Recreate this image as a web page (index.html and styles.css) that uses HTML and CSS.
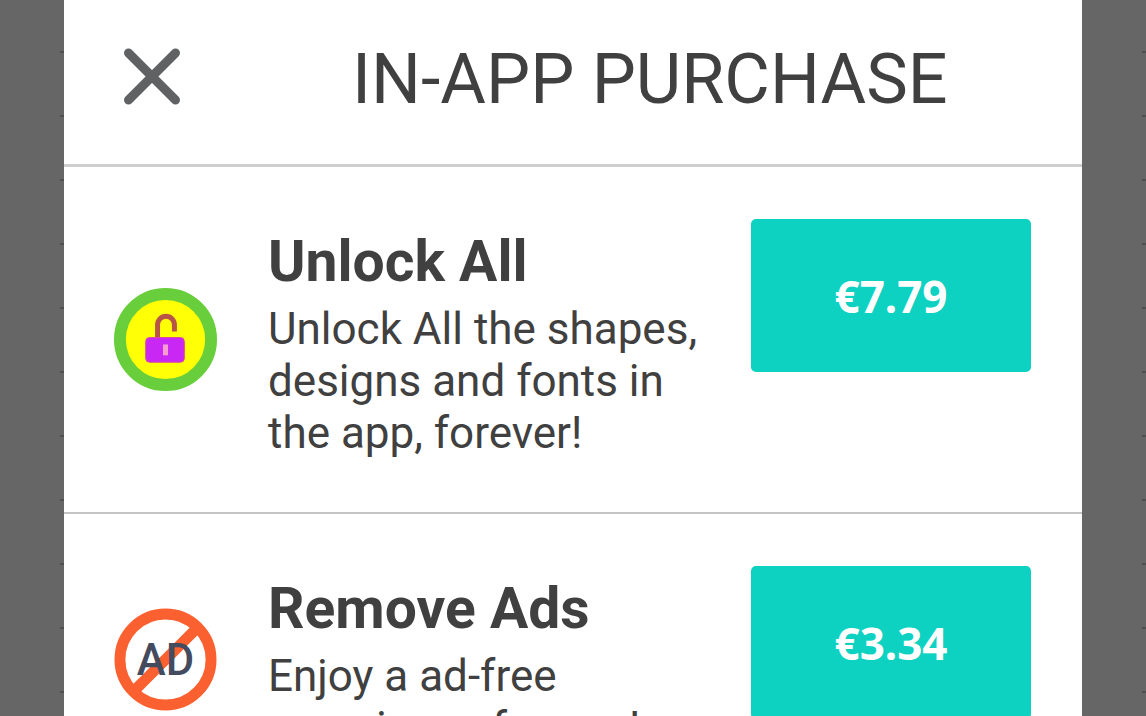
FILE: index.html
```html
<!DOCTYPE html>
<html lang="en">
<head>
<meta charset="utf-8">
<title>In-App Purchase</title>
<meta name="viewport" content="width=device-width, initial-scale=1">
<link rel="stylesheet" href="styles.css">
</head>
<body>
<div class="backdrop">
  <main class="dialog">
    <header class="header">
      <button class="close" type="button" aria-label="Close">
        <svg viewBox="0 0 60 60" aria-hidden="true"><path d="M6.500 4 53.500 51M53.500 4 6.500 51" stroke="#606162" stroke-width="9" stroke-linecap="round"/></svg>
      </button>
      <h1 class="title">IN-APP PURCHASE</h1>
    </header>
    <section class="item">
      <svg class="icon icon-unlock" viewBox="0 0 104 104" aria-hidden="true">
        <circle cx="52" cy="52" r="46" fill="#ffff05" stroke="#69ce3b" stroke-width="12"/>
        <path d="M44 52V37a8.500 8.500 0 0 1 17 0v7" fill="none" stroke="#b85448" stroke-width="5"/>
        <rect x="32" y="50" width="39" height="25" rx="4" fill="#c928f4" stroke="#dc4a9c" stroke-width="1"/>
        <path d="M49.500 57h5v11h-5z" fill="#f79bd0"/>
      </svg>
      <div class="details">
        <h2 class="name">Unlock All</h2>
        <p class="text">Unlock All the shapes, designs and fonts in the app, forever!</p>
      </div>
      <button class="price" type="button">€7.79</button>
    </section>
    <section class="item">
      <svg class="icon icon-ads" viewBox="0 0 104 104" aria-hidden="true">
        <circle cx="52" cy="52" r="46" fill="#fff" stroke="#fb6130" stroke-width="11"/>
        <path d="M20 84 84 20" stroke="#fb6130" stroke-width="11"/>
        <text class="ad" x="52" y="68" text-anchor="middle">AD</text>
      </svg>
      <div class="details">
        <h2 class="name">Remove Ads</h2>
        <p class="text">Enjoy a ad-free experience forever!</p>
      </div>
      <button class="price" type="button">€3.34</button>
    </section>
  </main>
</div>
</body>
</html>
```
FILE: styles.css
```css
* { box-sizing: border-box; }
body {
  margin: 0;
  height: 100vh;
  overflow: hidden;
  font-family: Roboto, sans-serif;
  color: #404040;
}
/* Faint ruler marks of the page behind the dialog */
.backdrop {
  min-height: 100vh;
  padding: 0 64px;
  background-color: #666;
  background-image:
    linear-gradient(transparent 51px, #505050 51px 53px, transparent 53px),
    linear-gradient(transparent 51px, #505050 51px 53px, transparent 53px);
  background-size: 4px 64px;
  background-position: 60px 0, 100% 0;
  background-repeat: repeat-y;
}
.dialog { background: #fff; }
.header {
  display: flex;
  align-items: center;
  height: 167px;
  padding: 0 56px 7px;
  border-bottom: 3px solid #cfcfcf;
}
.close {
  width: 64px;
  height: 64px;
  padding: 2px;
  border: 0;
  background: none;
}
.close svg { display: block; fill: none; overflow: visible; }
.title {
  flex: 1;
  margin: 0 0 0 168px;
  font-size: 70px;
  font-weight: 400;
  line-height: 84px;
  white-space: nowrap;
}
.item {
  display: flex;
  align-items: flex-start;
  min-height: 347px;
  padding: 52px 51px 50px 50px;
  border-bottom: 2px solid #c4c4c4;
}
.icon {
  flex: none;
  width: 103px;
  height: 103px;
  margin: 69px 51px 0 0;
}
.icon-ads { margin-top: 42px; }
.ad { font: 500 44px Roboto, sans-serif; fill: #444b5e; }
.details { flex: 1; padding-top: 9px; }
.name {
  margin: 0;
  font-size: 57px;
  font-weight: 700;
  line-height: 68px;
}
.text {
  margin: 7px 0 0;
  font-size: 44px;
  line-height: 52px;
}
.price {
  flex: none;
  width: 280px;
  height: 153px;
  margin-left: 32px;
  padding: 0;
  border: 0;
  border-radius: 5px;
  background: #0dd1c1;
  color: #fff;
  font: 700 44px "Noto Sans", sans-serif;
}
```
